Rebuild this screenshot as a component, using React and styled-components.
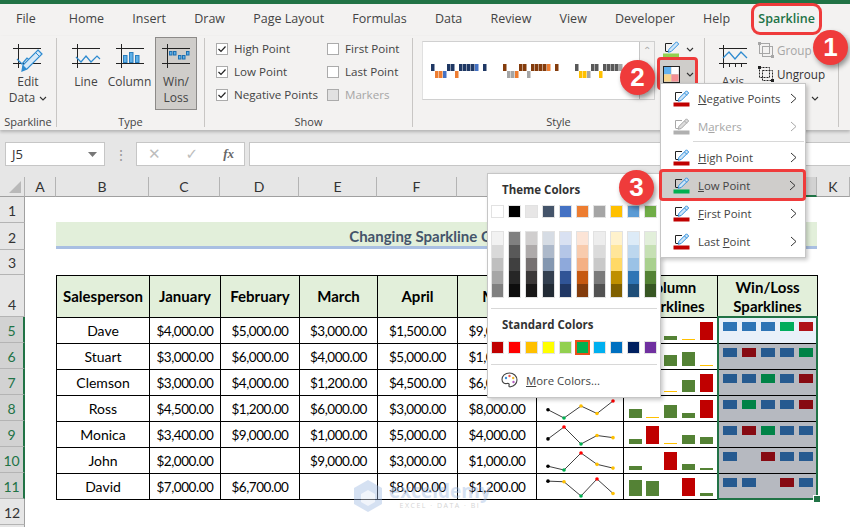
import React from "react";
import styled, { createGlobalStyle } from "styled-components";

const UI_FONT = `"Open Sans", "Noto Sans", sans-serif`;
const CELL_FONT = `Lato, "Liberation Sans", sans-serif`;
const RED = "#ef3b3b";
const GREEN = "#217346";

const tabs = ["Home", "Insert", "Draw", "Page Layout", "Formulas", "Data", "Review", "View", "Developer", "Help"];

const columns = ["A", "B", "C", "D", "E", "F", "G", "H", "I", "J", "K"];

const people = [
  { name: "Dave", values: [4000, 5000, 3000, 1500, 9000], win: "bbbgr" },
  { name: "Stuart", values: [3000, 6000, 4000, 5000, 1000], win: "brbbg" },
  { name: "Clemson", values: [3000, 4000, 1200, 4500, 6000], win: "bbgbr" },
  { name: "Ross", values: [4500, 1200, 6000, 3000, 8000], win: "bgbbr" },
  { name: "Monica", values: [3400, 9000, 1000, 5000, 4000], win: "brgbb" },
  { name: "John", values: [2000, 0, 9000, 3000, 1000], win: "b_rbb" },
  { name: "David", values: [7000, 6700, 0, 8000, 1200], win: "bb_rb" },
];

const themeColors = ["#ffffff", "#000000", "#e7e6e6", "#44546a", "#4472c4", "#ed7d31", "#a5a5a5", "#ffc000", "#5b9bd5", "#70ad47"];
const themeShades = [
  ["#f2f2f2", "#d9d9d9", "#bfbfbf", "#a6a6a6", "#808080"],
  ["#808080", "#595959", "#404040", "#262626", "#0d0d0d"],
  ["#d0cece", "#aeaaaa", "#767171", "#3b3838", "#181717"],
  ["#d6dce4", "#adb9ca", "#8497b0", "#333f4f", "#222b35"],
  ["#d9e1f2", "#b4c6e7", "#8ea9db", "#305496", "#203764"],
  ["#fce4d6", "#f8cbad", "#f4b084", "#c65911", "#833c0c"],
  ["#ededed", "#dbdbdb", "#c9c9c9", "#7b7b7b", "#525252"],
  ["#fff2cc", "#ffe699", "#ffd966", "#bf8f00", "#806000"],
  ["#ddebf7", "#bdd7ee", "#9bc2e6", "#2f75b5", "#1f4e78"],
  ["#e2efda", "#c6e0b4", "#a9d08e", "#548235", "#375623"],
];
const standardColors = ["#c00000", "#ff0000", "#ffc000", "#ffff00", "#92d050", "#00b050", "#00b0f0", "#0070c0", "#002060", "#7030a0"];

const money = (v) => (v ? "$" + v.toLocaleString("en-US") + ".00" : "");

function AxisLines() {
  return <path d="M1 4.5h28M1 19.5h28M6.5 0v24" stroke="#222" strokeWidth="1" fill="none" />;
}

function EditDataIcon() {
  return (
    <svg width="32" height="30" viewBox="0 0 32 30">
      <AxisLines />
      <path d="M5 15l5 5 5-6 5 4" stroke="#2e8bd0" strokeWidth="1.2" fill="none" />
      <path d="M26 6l4 4-15 15-5 2 1-6z" fill="#d6e9f8" stroke="#2e8bd0" strokeWidth="1.2" />
      <path d="M24 9l4 4" stroke="#2e8bd0" />
      <path d="M10 27l1-6 4 4z" fill="#2e8bd0" />
    </svg>
  );
}

function LineIcon() {
  return (
    <svg width="30" height="30" viewBox="0 0 30 30">
      <AxisLines />
      <path d="M5 13l5 5 5-6 5 6 6-6 3 3" stroke="#2e8bd0" strokeWidth="1.2" fill="none" />
    </svg>
  );
}

function ColumnIcon() {
  return (
    <svg width="30" height="30" viewBox="0 0 30 30">
      <AxisLines />
      <g fill="#5eb0e8" stroke="#2b7fbf" strokeWidth="1">
        <rect x="8.5" y="11.5" width="3.5" height="7" />
        <rect x="14.5" y="8.5" width="3.5" height="10" />
        <rect x="20.5" y="11.5" width="3.5" height="7" />
      </g>
    </svg>
  );
}

function WinLossIcon() {
  const tiles = [[8, 7], [12, 7], [17, 11], [21, 11], [25, 7]];
  return (
    <svg width="30" height="30" viewBox="0 0 30 30">
      <AxisLines />
      {tiles.map(([x, y]) => (
        <rect key={x} x={x + 0.5} y={y + 0.5} width="2.5" height="3.5" fill="#5eb0e8" stroke="#1d6fb0" />
      ))}
    </svg>
  );
}

function AxisIcon() {
  return (
    <svg width="30" height="30" viewBox="0 0 30 30">
      <path d="M1 4.5h28M1 19.5h28M5.5 1v23M11.5 19v4M17.5 19v4M23.5 19v4" stroke="#222" fill="none" />
      <path d="M5 14l6-6 6 7 6-7 6 6" stroke="#2e8bd0" strokeWidth="1.3" fill="none" />
    </svg>
  );
}

function GroupIcon({ muted }) {
  const c = muted ? "#a6a6a6" : "#222";
  return (
    <svg width="16" height="16" viewBox="0 0 16 16">
      <rect x="1.5" y="1.5" width="10" height="10" fill="none" stroke={c} strokeDasharray={muted ? "0" : "2 1"} />
      <rect x="4.5" y="4.5" width="10" height="10" fill="none" stroke={c} strokeDasharray={muted ? "0" : "2 1"} />
      <g fill={c}>
        <rect x="0" y="0" width="3" height="3" />
        <rect x="13" y="13" width="3" height="3" />
      </g>
    </svg>
  );
}

function PenIcon({ color, muted }) {
  const pen = muted ? "#a8a8a8" : "#2f8fdc";
  const box = muted ? "#a8a8a8" : "#222";
  return (
    <svg width="17" height="17" viewBox="0 0 17 17">
      <path d="M2.5 10V2.5H9M2.5 10.5H5" stroke={box} fill="none" />
      <path d="M13.5 0.8l2.2 2.2-7.5 7.5-3 .8 .8-3z" fill={muted ? "#dcdcdc" : "#cfe6f8"} stroke={pen} />
      <path d="M11.5 3l2.3 2.3" stroke={pen} />
      <rect x="0.5" y="12.5" width="16" height="4" fill={color} />
    </svg>
  );
}

function Chevron() {
  return (
    <ChevronSvg width="8" height="5" viewBox="0 0 8 5">
      <path d="M1 1l3 3 3-3" stroke="#333" strokeWidth="1.1" fill="none" />
    </ChevronSvg>
  );
}

function MenuArrow({ muted }) {
  return (
    <svg width="7" height="11" viewBox="0 0 7 11">
      <path d="M1 1l5 4.5-5 4.5" stroke={muted ? "#a8a8a8" : "#333"} strokeWidth="1" fill="none" />
    </svg>
  );
}

function CheckMark() {
  return (
    <svg width="10" height="10" viewBox="0 0 10 10">
      <path d="M1.5 5l2.5 2.5 4.5-5" stroke="#222" strokeWidth="1.2" fill="none" />
    </svg>
  );
}

// u = up bar, d = down bar, A = accent down, a = accent up, _ = gap
function Thumb({ up, down, accent }) {
  const pattern = "uddAuuduuuua_u";
  const fills = { u: up, d: down, A: accent, a: accent };
  return (
    <svg width="56" height="16" viewBox="0 0 56 16">
      {pattern.split("").map((k, i) =>
        k === "_" ? null : (
          <rect key={i} x={i * 4} y={k === "u" || k === "a" ? 0 : 7} width="3.5" height="7" fill={fills[k]} />
        )
      )}
    </svg>
  );
}

function ColorMarkerIcon() {
  return (
    <svg width="17" height="17" viewBox="0 0 17 17">
      <rect x="1" y="1" width="7" height="7" fill="#62b2ee" />
      <rect x="8.5" y="1" width="7" height="7" fill="#fff" />
      <rect x="1" y="8.5" width="7" height="7" fill="#f7d58c" />
      <rect x="8.5" y="8.5" width="7" height="7" fill="#f59094" />
      <rect x="0.5" y="0.5" width="16" height="16" fill="none" stroke="#222" />
    </svg>
  );
}

function PaletteIcon() {
  return (
    <svg width="17" height="16" viewBox="0 0 17 16">
      <path d="M8.5 1C4 1 1 4 1 7.5 1 11 4 12 6 11.5c2-.5 2.5 1 2 2-.4 1 .5 1.5 1.5 1.3C13 14.2 16 11.5 16 8c0-4-3.5-7-7.5-7z" fill="#fff" stroke="#444" strokeWidth="1.1" />
      <circle cx="5" cy="6" r="1.2" fill="#3b8ed8" />
      <circle cx="8.5" cy="4" r="1.2" fill="#e55a4f" />
      <circle cx="12.2" cy="6" r="1.2" fill="#f1b82d" />
      <circle cx="12.5" cy="10" r="1.2" fill="#b35cc0" />
    </svg>
  );
}

function LineSpark({ values }) {
  const max = Math.max(...values);
  const hasGap = values.includes(0);
  const min = hasGap ? 0 : Math.min(...values);
  const xs = [11, 27, 44, 60, 76];
  const ys = values.map((v) => 22 - ((v - min) / (max - min)) * 17);
  const color = (v, i) => {
    if (i === 0) return "#000";
    if (v === max) return "#ff0000";
    if (v === min) return "#00b050";
    return "#ffc000";
  };
  return (
    <svg width="86" height="25" viewBox="0 0 86 25">
      <polyline points={xs.map((x, i) => `${x},${ys[i]}`).join(" ")} fill="none" stroke="#404040" strokeWidth="1" />
      {xs.map((x, i) => (
        <circle key={x} cx={x} cy={ys[i]} r="1.8" fill={color(values[i], i)} />
      ))}
    </svg>
  );
}

function ColumnSpark({ values }) {
  const max = Math.max(...values);
  const hasGap = values.includes(0);
  const min = hasGap ? 0 : Math.min(...values);
  const xs = [5, 22, 40, 58, 76];
  return (
    <svg width="93" height="25" viewBox="0 0 93 25">
      {values.map((v, i) => {
        if (!v) return null;
        const h = Math.max(1, Math.round(((v - min) / (max - min)) * 18));
        const fill = v === max ? "#c00000" : v === min && !hasGap ? "#ffc000" : "#548235";
        return <rect key={i} x={xs[i]} y={22 - h} width="13" height={h} fill={fill} />;
      })}
    </svg>
  );
}

export default function App() {
  return (
    <Window>
      <GlobalStyle />
      <TitleStrip />
      <TabBar>
        <Tab>File</Tab>
        <TabList>
          {tabs.map((t) => (
            <Tab key={t}>{t}</Tab>
          ))}
          <ActiveTab>Sparkline</ActiveTab>
        </TabList>
      </TabBar>

      <Ribbon>
        <Group $w={56}>
          <GroupBody $left={10}>
            <BigButton $w={36}>
              <EditDataIcon />
              <BigLabel>Edit</BigLabel>
              <BigLabel>Data <Chevron /></BigLabel>
            </BigButton>
          </GroupBody>
          <GroupLabel>Sparkline</GroupLabel>
        </Group>
        <RibbonSep />
        <Group $w={147}>
          <GroupBody $left={9}>
            <BigButton $w={40}>
              <LineIcon />
              <BigLabel>Line</BigLabel>
            </BigButton>
            <BigButton $w={45}>
              <ColumnIcon />
              <BigLabel>Column</BigLabel>
            </BigButton>
            <PressedButton $w={42}>
              <WinLossIcon />
              <BigLabel>Win/</BigLabel>
              <BigLabel>Loss</BigLabel>
            </PressedButton>
          </GroupBody>
          <GroupLabel>Type</GroupLabel>
        </Group>
        <RibbonSep />
        <Group $w={207}>
          <ShowGrid>
            <CheckRow><Box><CheckMark /></Box>High Point</CheckRow>
            <CheckRow><Box><CheckMark /></Box>Low Point</CheckRow>
            <CheckRow><Box><CheckMark /></Box>Negative Points</CheckRow>
            <CheckRow><Box />First Point</CheckRow>
            <CheckRow><Box />Last Point</CheckRow>
            <CheckRow $disabled><Box $disabled />Markers</CheckRow>
          </ShowGrid>
          <GroupLabel>Show</GroupLabel>
        </Group>
        <RibbonSep />
        <Group $w={291}>
          <GroupBody $left={9}>
            <Gallery>
              <GalleryItems>
                <Thumb up="#1f3864" down="#ed7d31" accent="#4472c4" />
                <Thumb up="#843c0c" down="#a5a5a5" accent="#ed7d31" />
                <Thumb up="#595959" down="#ffc000" accent="#a5a5a5" />
              </GalleryItems>
              <GalleryScroll>
                <ScrollCell>⌃</ScrollCell>
                <ScrollCell />
                <ScrollCell>⌄</ScrollCell>
              </GalleryScroll>
            </Gallery>
            <ColorButtons>
              <ColorButton>
                <svg width="17" height="17" viewBox="0 0 17 17">
                  <path d="M2.5 10V2.5H9M2.5 10.5H5" stroke="#222" fill="none" />
                  <path d="M13.5 0.8l2.2 2.2-7.5 7.5-3 .8 .8-3z" fill="#cfe6f8" stroke="#2f8fdc" />
                  <rect x="0" y="12.5" width="16" height="4.5" fill="#92d050" />
                </svg>
                <Chevron />
              </ColorButton>
              <MarkerButton>
                <ColorMarkerIcon />
                <Chevron />
              </MarkerButton>
            </ColorButtons>
          </GroupBody>
          <GroupLabel>Style</GroupLabel>
        </Group>
        <RibbonSep />
        <Group $w={133}>
          <GroupBody $left={8}>
            <BigButton $w={40}>
              <AxisIcon />
              <BigLabel>Axis</BigLabel>
            </BigButton>
            <ArrangeList>
              <ArrangeRow $muted><GroupIcon muted />Group</ArrangeRow>
              <ArrangeRow><GroupIcon />Ungroup</ArrangeRow>
              <ClearRow>Clear <Chevron /></ClearRow>
            </ArrangeList>
          </GroupBody>
        </Group>
        <RibbonSep />
      </Ribbon>

      <FormulaBar>
        <NameBox>
          J5
          <svg width="9" height="5" viewBox="0 0 9 5"><path d="M0 0h9L4.5 5z" fill="#777" /></svg>
        </NameBox>
        <Grip>⋮</Grip>
        <FxBox>
          <FxGlyph>✕</FxGlyph>
          <FxGlyph>✓</FxGlyph>
          <FxLabel>fx</FxLabel>
        </FxBox>
        <FormulaInput />
      </FormulaBar>

      <Sheet>
        <Corner><Triangle /></Corner>
        {columns.map((c) => (
          <ColHead key={c} $selected={c === "J"}>{c}</ColHead>
        ))}

        <RowHead>1</RowHead>
        <EmptyRow />

        <RowHead>2</RowHead>
        <Spacer />
        <TitleCell>Changing Sparkline Colors</TitleCell>
        <Spacer />

        <RowHead>3</RowHead>
        <EmptyRow />

        <RowHead>4</RowHead>
        <Spacer />
        <HeadCell>Salesperson</HeadCell>
        <HeadCell>January</HeadCell>
        <HeadCell>February</HeadCell>
        <HeadCell>March</HeadCell>
        <HeadCell>April</HeadCell>
        <HeadCell>May</HeadCell>
        <HeadCell>Line<br />Sparklines</HeadCell>
        <HeadCell>Column<br />Sparklines</HeadCell>
        <HeadCell>Win/Loss<br />Sparklines</HeadCell>
        <Spacer />

        {people.map((p, r) => (
          <React.Fragment key={p.name}>
            <RowHead $selected>{r + 5}</RowHead>
            <Spacer />
            <Cell>{p.name}</Cell>
            {p.values.map((v, i) => (
              <MoneyCell key={i}>{money(v)}</MoneyCell>
            ))}
            <Cell><LineSpark values={p.values} /></Cell>
            <Cell><ColumnSpark values={p.values} /></Cell>
            <WinCell $active={r === 0}>
              {p.win.split("").map((k, i) => (
                <WinTile key={i} $kind={k} $active={r === 0} />
              ))}
            </WinCell>
            <Spacer />
          </React.Fragment>
        ))}

        <RowHead>12</RowHead>
        <EmptyRow />
        <RowHead />
        <EmptyRow />

        <Selection><FillHandle /></Selection>
        <Watermark>
          <svg width="30" height="32" viewBox="0 0 30 32">
            <path d="M15 0l14 8v16l-14 8-14-8V8z" fill="#9db8e2" />
            <path d="M15 10l7 4v8l-7 4-7-4v-8z" fill="#dfe8f6" />
          </svg>
          <WatermarkText>
            <WatermarkName>exceldemy</WatermarkName>
            <WatermarkTag>EXCEL · DATA · BI</WatermarkTag>
          </WatermarkText>
        </Watermark>
      </Sheet>

      <ColorMenu>
        <ColorHeading>Theme Colors</ColorHeading>
        <SwatchRow>
          {themeColors.map((c) => (
            <Swatch key={c} $color={c} />
          ))}
        </SwatchRow>
        <ShadeGrid>
          {themeShades.map((col, i) => (
            <ShadeColumn key={i}>
              {col.map((c) => (
                <Shade key={c} $color={c} />
              ))}
            </ShadeColumn>
          ))}
        </ShadeGrid>
        <ColorDivider />
        <ColorHeading>Standard Colors</ColorHeading>
        <StandardRow>
          {standardColors.map((c) => (
            <Swatch key={c} $color={c} $picked={c === "#00b050"} />
          ))}
        </StandardRow>
        <ColorDivider />
        <MoreColors>
          <PaletteIcon />
          <span><u>M</u>ore Colors...</span>
        </MoreColors>
      </ColorMenu>

      <PointMenu>
        <MenuRow>
          <PenIcon color="#c00000" />
          <MenuText><u>N</u>egative Points</MenuText>
          <MenuArrow />
        </MenuRow>
        <MenuRow $muted>
          <PenIcon color="#b0b0b0" muted />
          <MenuText>M<u>a</u>rkers</MenuText>
          <MenuArrow muted />
        </MenuRow>
        <MenuDivider />
        <MenuRow>
          <PenIcon color="#c00000" />
          <MenuText><u>H</u>igh Point</MenuText>
          <MenuArrow />
        </MenuRow>
        <LowPointRow>
          <PenIcon color="#00b050" />
          <MenuText><u>L</u>ow Point</MenuText>
          <MenuArrow />
        </LowPointRow>
        <MenuRow>
          <PenIcon color="#c00000" />
          <MenuText><u>F</u>irst Point</MenuText>
          <MenuArrow />
        </MenuRow>
        <MenuRow>
          <PenIcon color="#c00000" />
          <MenuText>Last <u>P</u>oint</MenuText>
          <MenuArrow />
        </MenuRow>
      </PointMenu>

      <Badge $left={813} $top={30}>1</Badge>
      <Badge $left={620} $top={60}>2</Badge>
      <Badge $left={619} $top={170}>3</Badge>
    </Window>
  );
}

const GlobalStyle = createGlobalStyle`
  html, body {
    margin: 0;
    padding: 0;
    background: #fff;
    overflow: hidden;
  }
  * {
    box-sizing: border-box;
  }
`;

const Window = styled.div`
  position: relative;
  width: 850px;
  height: 527px;
  overflow: hidden;
  font-family: ${UI_FONT};
  font-size: 12.5px;
  color: #444;
  background: #fff;
`;

const TitleStrip = styled.div`
  height: 4px;
  background: ${GREEN};
`;

const TabBar = styled.div`
  display: flex;
  align-items: center;
  height: 32px;
  padding: 0 0 2px 16px;
  background: #f3f2f1;
  gap: 33px;
`;

const TabList = styled.div`
  display: flex;
  gap: 28.2px;
`;

const Tab = styled.div`
  font-size: 12.5px;
  line-height: 18px;
  color: #444;
  white-space: nowrap;
`;

const ActiveTab = styled(Tab)`
  color: ${GREEN};
  font-weight: 600;
  outline: 3px solid ${RED};
  outline-offset: 4px;
  border-radius: 2px;
`;

const Ribbon = styled.div`
  display: flex;
  height: 94px;
  padding-top: 1px;
  background: #f3f2f1;
  box-shadow: 0 2px 3px rgba(0, 0, 0, 0.22);
  position: relative;
  z-index: 1;
`;

const Group = styled.div`
  display: flex;
  flex-direction: column;
  width: ${(p) => p.$w}px;
  flex: none;
`;

const GroupBody = styled.div`
  display: flex;
  flex: 1;
  padding-left: ${(p) => p.$left}px;
`;

const GroupLabel = styled.div`
  height: 15px;
  padding-bottom: 1px;
  text-align: center;
  font-size: 11px;
  line-height: 14px;
  color: #444;
`;

const RibbonSep = styled.div`
  width: 1px;
  flex: none;
  margin: 1px 0 3px;
  background: #c8c6c4;
`;

const BigButton = styled.div`
  display: flex;
  flex-direction: column;
  align-items: center;
  width: ${(p) => p.$w}px;
  height: 73px;
  padding-top: 7px;
  margin-right: 1px;
  flex: none;
  overflow: visible;
  svg {
    flex: none;
  }
`;

const PressedButton = styled(BigButton)`
  margin-left: 2px;
  background: #cfcdca;
  border: 1px solid #8c8a88;
  padding-top: 6px;
`;

const BigLabel = styled.div`
  font-size: 12px;
  line-height: 16px;
  white-space: nowrap;
  color: #444;
`;

const ChevronSvg = styled.svg`
  vertical-align: middle;
  margin-left: 1px;
`;

const ShowGrid = styled.div`
  display: grid;
  flex: 1;
  grid-template-rows: repeat(3, 23px);
  grid-template-columns: 111px auto;
  grid-auto-flow: column;
  padding-left: 11px;
  align-content: start;
  font-size: 11.6px;
`;

const CheckRow = styled.div`
  display: flex;
  align-items: center;
  gap: 6px;
  white-space: nowrap;
  color: ${(p) => (p.$disabled ? "#a6a6a6" : "#444")};
`;

const Box = styled.div`
  display: flex;
  align-items: center;
  justify-content: center;
  width: 12px;
  height: 12px;
  border: 1px solid #ababab;
  background: ${(p) => (p.$disabled ? "#e1e1e1" : "#fff")};
`;

const Gallery = styled.div`
  display: flex;
  width: 233px;
  height: 59px;
  margin-top: 4px;
  background: #fff;
  border: 1px solid #d0d0d0;
  border-left-color: #e0e0e0;
`;

const GalleryItems = styled.div`
  display: flex;
  flex: 1;
  align-items: center;
  gap: 16px;
  padding: 2px 0 0 8px;
  overflow: hidden;
`;

const GalleryScroll = styled.div`
  display: flex;
  flex-direction: column;
  width: 15px;
  flex: none;
  border-left: 1px solid #c6c6c6;
  background: #f3f2f1;
`;

const ScrollCell = styled.div`
  flex: 1;
  text-align: center;
  font-size: 10px;
  line-height: 16px;
  color: #aaa;
`;

const ColorButtons = styled.div`
  display: flex;
  flex-direction: column;
  margin: 3px 0 0 5px;
  gap: 2px;
  width: 35px;
`;

const ColorButton = styled.div`
  display: flex;
  align-items: center;
  gap: 5px;
  height: 18px;
  padding-left: 3px;
`;

const MarkerButton = styled(ColorButton)`
  height: 27px;
  background: #cfcdca;
  padding-top: 2px;
  outline: 3px solid ${RED};
  border-radius: 1px;
`;

const ArrangeList = styled.div`
  display: flex;
  flex-direction: column;
  padding: 1px 0 0 4px;
`;

const ArrangeRow = styled.div`
  display: flex;
  align-items: center;
  gap: 3px;
  height: 24px;
  white-space: nowrap;
  font-size: 11.7px;
  color: ${(p) => (p.$muted ? "#a6a6a6" : "#333")};
`;

const ClearRow = styled(ArrangeRow)`
  padding-left: 15px;
  gap: 9px;
`;

const FormulaBar = styled.div`
  display: flex;
  align-items: center;
  height: 47px;
  padding: 12px 0 11px 5px;
  background: #e6e6e6;
`;

const NameBox = styled.div`
  display: flex;
  align-items: center;
  justify-content: space-between;
  width: 100px;
  height: 24px;
  padding: 0 7px 0 6px;
  background: #fff;
  border: 1px solid #c6c6c6;
  font-family: ${UI_FONT};
  font-size: 13px;
  color: #333;
`;

const Grip = styled.div`
  width: 31px;
  text-align: center;
  color: #999;
  font-size: 14px;
`;

const FxBox = styled.div`
  display: flex;
  align-items: center;
  width: 109px;
  height: 24px;
  padding: 0 10px 0 11px;
  justify-content: space-between;
  background: #fff;
  border: 1px solid #c6c6c6;
`;

const FxGlyph = styled.span`
  color: #bdbdbd;
  font-family: "DejaVu Sans", sans-serif;
  font-size: 15px;
`;

const FxLabel = styled.span`
  font-family: "Liberation Serif", serif;
  font-style: italic;
  font-weight: 700;
  font-size: 13px;
  color: #666;
`;

const FormulaInput = styled.div`
  flex: 1;
  height: 24px;
  margin-left: 4px;
  background: #fff;
  border: 1px solid #c6c6c6;
  border-right: none;
`;

const Sheet = styled.div`
  position: relative;
  display: grid;
  grid-template-columns: 25px 31px 93px 71px 79px 78px 80px 79px 87px 94px 100px 33px;
  grid-template-rows: 20px 26px 27px 25px 42px repeat(9, 26px);
  font-family: ${CELL_FONT};
  font-size: 14px;
  color: #000;
`;

const Corner = styled.div`
  position: relative;
  background: #e6e6e6;
  border-right: 1px solid #b4b4b4;
  border-bottom: 1px solid #a0a0a0;
`;

const Triangle = styled.div`
  position: absolute;
  right: 3px;
  bottom: 3px;
  border-left: 12px solid transparent;
  border-bottom: 12px solid #b9b9b9;
`;

const ColHead = styled.div`
  display: flex;
  align-items: center;
  justify-content: center;
  background: ${(p) => (p.$selected ? "#d2d2d2" : "#e6e6e6")};
  border-right: 1px solid #b4b4b4;
  border-bottom: ${(p) => (p.$selected ? `2px solid ${GREEN}` : "1px solid #a0a0a0")};
  color: #333;
`;

const RowHead = styled.div`
  display: flex;
  align-items: flex-end;
  justify-content: center;
  padding-bottom: 2px;
  background: ${(p) => (p.$selected ? "#d2d2d2" : "#e6e6e6")};
  border-bottom: 1px solid #b4b4b4;
  border-right: ${(p) => (p.$selected ? `2px solid ${GREEN}` : "1px solid #a0a0a0")};
  color: ${(p) => (p.$selected ? "#217346" : "#333")};
  line-height: 18px;
`;

const EmptyRow = styled.div`
  grid-column: 2 / -1;
`;

const Spacer = styled.div``;

const TitleCell = styled.div`
  grid-column: span 9;
  height: 27px;
  margin-top: -1px;
  background: #e2efda;
  border-bottom: 3px solid #a9bfe2;
  text-align: center;
  font-weight: 700;
  font-size: 15px;
  line-height: 28px;
  color: #44546a;
`;

const Cell = styled.div`
  display: flex;
  align-items: center;
  justify-content: center;
  margin: 0 -1px -1px 0;
  border: 1px solid #000;
  white-space: nowrap;
  min-width: 0;
`;

const MoneyCell = styled(Cell)`
  font-size: 13.5px;
  letter-spacing: -0.45px;
`;

const HeadCell = styled(Cell)`
  background: #e2efda;
  font-weight: 700;
  font-size: 15px;
  text-align: center;
  line-height: 19px;
`;

const WinCell = styled(Cell)`
  display: grid;
  grid-template-columns: repeat(5, 14px);
  column-gap: 5px;
  justify-content: start;
  align-items: start;
  padding: 4px 0 0 5px;
  background: ${(p) => (p.$active ? "#e9f0f9" : "#b6b9c0")};
`;

const winColors = {
  active: { b: "#2e74b5", g: "#00ac5c", r: "#b01118", _: "transparent" },
  dim: { b: "#265a90", g: "#008347", r: "#870a12", _: "transparent" },
};

const WinTile = styled.div`
  height: 9px;
  background: ${(p) => winColors[p.$active ? "active" : "dim"][p.$kind]};
`;

const Selection = styled.div`
  position: absolute;
  left: 717px;
  top: 139px;
  width: 101px;
  height: 184px;
  border: 2px solid ${GREEN};
  pointer-events: none;
`;

const FillHandle = styled.div`
  position: absolute;
  right: -4px;
  bottom: -4px;
  width: 7px;
  height: 7px;
  background: ${GREEN};
  border: 1px solid #fff;
  border-right: none;
  border-bottom: none;
`;

const Watermark = styled.div`
  position: absolute;
  left: 353px;
  top: 303px;
  display: flex;
  align-items: center;
  gap: 6px;
  opacity: 0.42;
  pointer-events: none;
`;

const WatermarkText = styled.div`
  display: flex;
  flex-direction: column;
  align-items: flex-start;
`;

const WatermarkName = styled.div`
  font-family: ${UI_FONT};
  font-weight: 700;
  font-size: 19px;
  line-height: 19px;
  color: #9db8e2;
`;

const WatermarkTag = styled.div`
  align-self: center;
  font-family: ${UI_FONT};
  font-size: 7px;
  line-height: 9px;
  letter-spacing: 1.5px;
  color: #999;
`;

const ColorMenu = styled.div`
  position: absolute;
  left: 487px;
  top: 173px;
  width: 174px;
  height: 225px;
  padding: 8px 3px 0 3px;
  background: #fff;
  border: 1px solid #c6c6c6;
  box-shadow: 2px 2px 4px rgba(0, 0, 0, 0.22);
  z-index: 2;
`;

const ColorHeading = styled.div`
  padding-left: 11px;
  font-weight: 700;
  font-size: 11.5px;
  line-height: 16px;
  color: #333;
`;

const SwatchRow = styled.div`
  display: flex;
  gap: 4px;
  margin-top: 7px;
`;

const StandardRow = styled(SwatchRow)`
  margin: 8px 0 1px;
`;

const Swatch = styled.div`
  width: 13px;
  height: 13px;
  background: ${(p) => p.$color};
  border: 1px solid ${(p) => (p.$picked ? "#e8501c" : "#e2e2e2")};
  outline: ${(p) => (p.$picked ? "1px solid #e8501c" : "none")};
`;

const ShadeGrid = styled.div`
  display: flex;
  gap: 4px;
  margin-top: 13px;
`;

const ShadeColumn = styled.div`
  display: flex;
  flex-direction: column;
  border: 1px solid #e2e2e2;
`;

const Shade = styled.div`
  width: 11px;
  height: 13px;
  background: ${(p) => p.$color};
`;

const ColorDivider = styled.div`
  height: 1px;
  margin: 10px 0 8px;
  background: #d8d8d8;
`;

const MoreColors = styled.div`
  display: flex;
  align-items: center;
  gap: 8px;
  margin-top: -1px;
  padding-left: 10px;
  font-size: 11.4px;
  color: #444;
`;

const PointMenu = styled.div`
  position: absolute;
  left: 660px;
  top: 83px;
  width: 146px;
  height: 175px;
  background: #fff;
  border: 1px solid #c6c6c6;
  box-shadow: 2px 2px 4px rgba(0, 0, 0, 0.22);
  z-index: 3;
`;

const MenuRow = styled.div`
  display: flex;
  align-items: center;
  height: 28px;
  padding: 0 8px 0 12px;
  color: ${(p) => (p.$muted ? "#a6a6a6" : "#444")};
  font-size: 11.4px;
`;

const LowPointRow = styled(MenuRow)`
  margin-right: 1px;
  background: #cfcdcb;
  outline: 3px solid ${RED};
  outline-offset: -1px;
  border-radius: 2px;
`;

const MenuText = styled.span`
  flex: 1;
  margin-left: 8px;
  white-space: nowrap;
`;

const MenuDivider = styled.div`
  height: 1px;
  margin: 1px 1px 1px 32px;
  background: #d8d8d8;
`;

const Badge = styled.div`
  position: absolute;
  left: ${(p) => p.$left}px;
  top: ${(p) => p.$top}px;
  display: flex;
  align-items: center;
  justify-content: center;
  width: 35px;
  height: 35px;
  border-radius: 50%;
  background: ${RED};
  color: #fff;
  font-family: "Liberation Sans", sans-serif;
  font-weight: 700;
  font-size: 26px;
  box-shadow: 2px 3px 5px rgba(0, 0, 0, 0.4);
  z-index: 4;
`;
